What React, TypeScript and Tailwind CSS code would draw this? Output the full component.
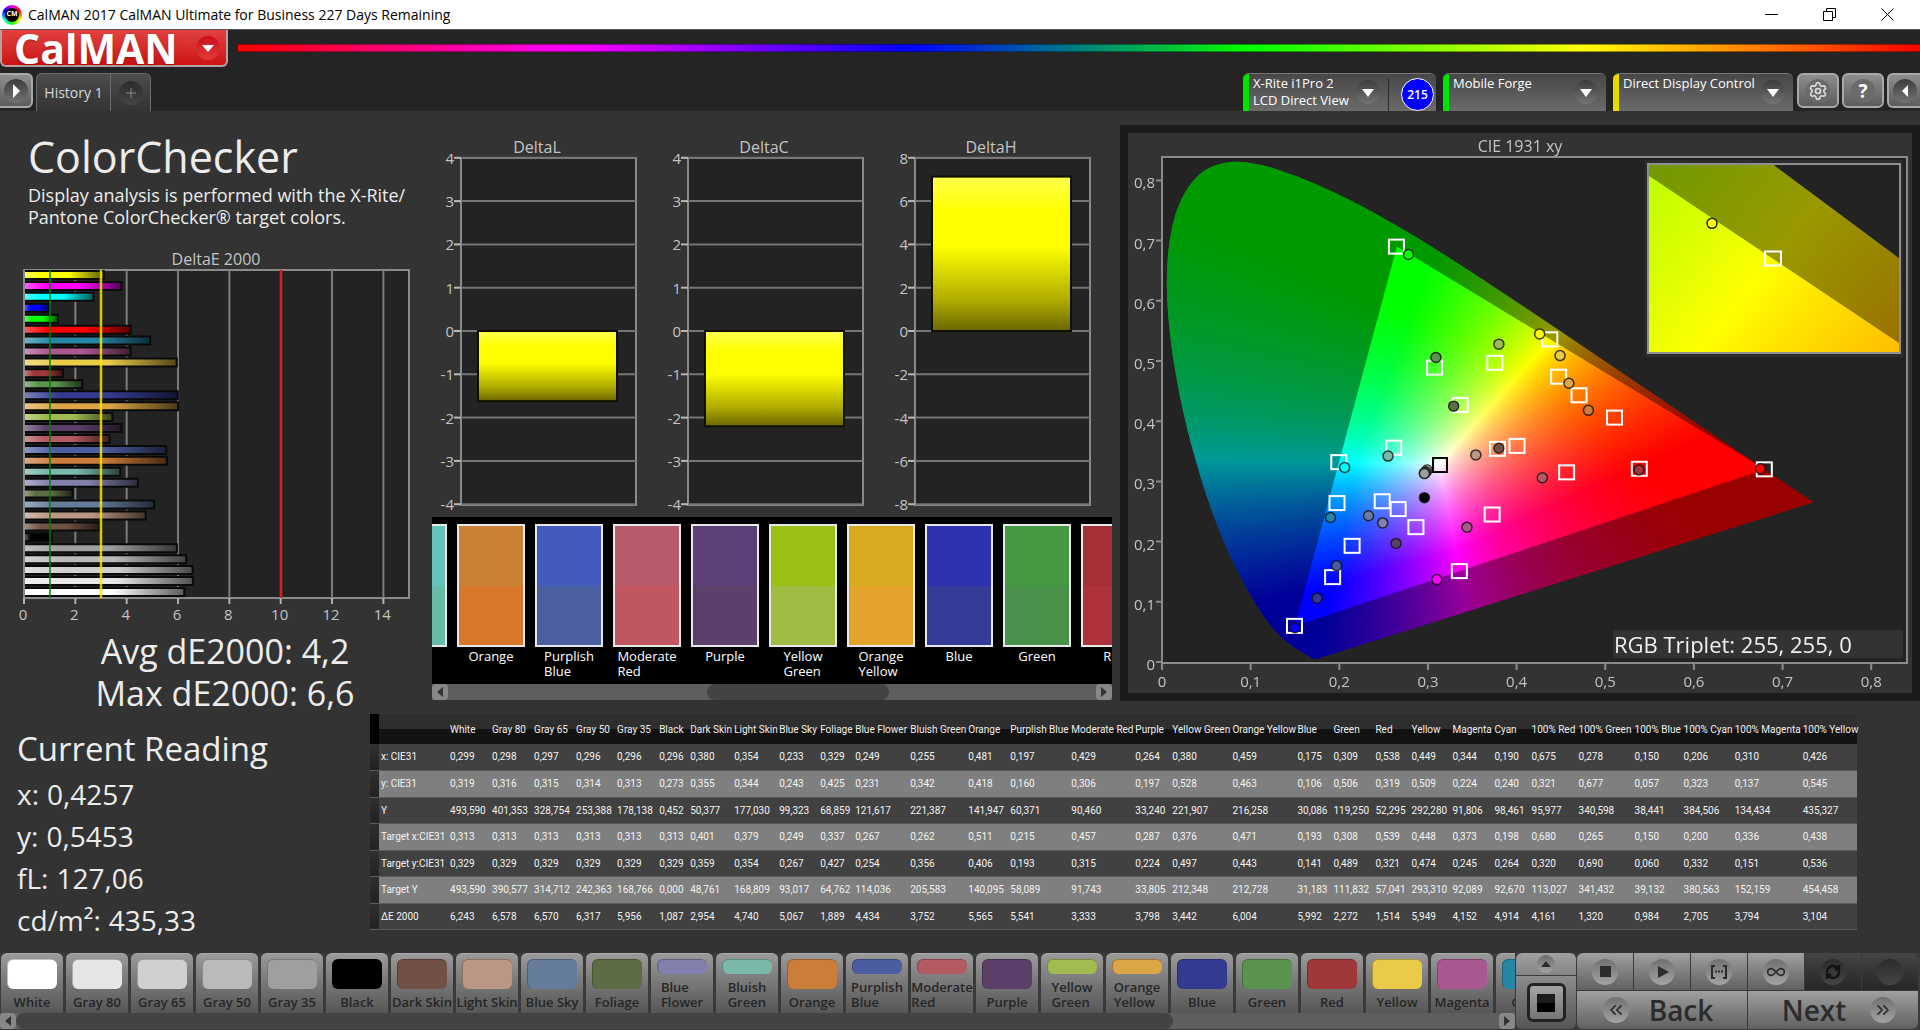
import { useEffect, useRef } from "react";
import type { ReactNode } from "react";
import { ChevronsLeft, ChevronsRight, Infinity as InfinityIcon, RefreshCw, Settings } from "lucide-react";

type Patch = {
  name: string;
  color: string;
  width: number;
  values: string[];
};

const ROWS = ["x: CIE31", "y: CIE31", "Y", "Target x:CIE31", "Target y:CIE31", "Target Y", "ΔE 2000"];

const PATCHES: Patch[] = [
  { name: "White", color: "#ffffff", width: 42, values: ["0,299", "0,319", "493,590", "0,313", "0,329", "493,590", "6,243"] },
  { name: "Gray 80", color: "#e6e6e6", width: 42, values: ["0,298", "0,316", "401,353", "0,313", "0,329", "390,577", "6,578"] },
  { name: "Gray 65", color: "#d0d0d0", width: 42, values: ["0,297", "0,315", "328,754", "0,313", "0,329", "314,712", "6,570"] },
  { name: "Gray 50", color: "#bababa", width: 41, values: ["0,296", "0,314", "253,388", "0,313", "0,329", "242,363", "6,317"] },
  { name: "Gray 35", color: "#9f9f9f", width: 42, values: ["0,296", "0,313", "178,138", "0,313", "0,329", "168,766", "5,956"] },
  { name: "Black", color: "#000000", width: 31, values: ["0,296", "0,273", "0,452", "0,313", "0,329", "0,000", "1,087"] },
  { name: "Dark Skin", color: "#6f5145", width: 44, values: ["0,380", "0,355", "50,377", "0,401", "0,359", "48,761", "2,954"] },
  { name: "Light Skin", color: "#ba9684", width: 45, values: ["0,354", "0,344", "177,030", "0,379", "0,354", "168,809", "4,740"] },
  { name: "Blue Sky", color: "#667c9c", width: 41, values: ["0,233", "0,243", "99,323", "0,249", "0,267", "93,017", "5,067"] },
  { name: "Foliage", color: "#5c6c45", width: 35, values: ["0,329", "0,425", "68,859", "0,337", "0,427", "64,762", "1,889"] },
  { name: "Blue Flower", color: "#8280ad", width: 55, values: ["0,249", "0,231", "121,617", "0,267", "0,254", "114,036", "4,434"] },
  { name: "Bluish Green", color: "#7ab8a9", width: 58, values: ["0,255", "0,342", "221,387", "0,262", "0,356", "205,583", "3,752"] },
  { name: "Orange", color: "#cc7c3b", width: 42, values: ["0,481", "0,418", "141,947", "0,511", "0,406", "140,095", "5,565"] },
  { name: "Purplish Blue", color: "#4b5ca0", width: 61, values: ["0,197", "0,160", "60,371", "0,215", "0,193", "58,089", "5,541"] },
  { name: "Moderate Red", color: "#b35a62", width: 64, values: ["0,429", "0,306", "90,460", "0,457", "0,315", "91,743", "3,333"] },
  { name: "Purple", color: "#5a3f69", width: 37, values: ["0,264", "0,197", "33,240", "0,287", "0,224", "33,805", "3,798"] },
  { name: "Yellow Green", color: "#a2bb50", width: 60, values: ["0,380", "0,528", "221,907", "0,376", "0,497", "212,348", "3,442"] },
  { name: "Orange Yellow", color: "#dca546", width: 65, values: ["0,459", "0,463", "216,258", "0,471", "0,443", "212,728", "6,004"] },
  { name: "Blue", color: "#343a91", width: 36, values: ["0,175", "0,106", "30,086", "0,193", "0,141", "31,183", "5,992"] },
  { name: "Green", color: "#5b944f", width: 42, values: ["0,309", "0,506", "119,250", "0,308", "0,489", "111,832", "2,272"] },
  { name: "Red", color: "#a0373a", width: 36, values: ["0,538", "0,319", "52,295", "0,539", "0,321", "57,041", "1,514"] },
  { name: "Yellow", color: "#e9cb49", width: 41, values: ["0,449", "0,509", "292,280", "0,448", "0,474", "293,310", "5,949"] },
  { name: "Magenta", color: "#ac5890", width: 42, values: ["0,344", "0,224", "91,806", "0,373", "0,245", "92,089", "4,152"] },
  { name: "Cyan", color: "#2785a5", width: 37, values: ["0,190", "0,240", "98,461", "0,198", "0,264", "92,670", "4,914"] },
  { name: "100% Red", color: "#ff0000", width: 47, values: ["0,675", "0,321", "95,977", "0,680", "0,320", "113,027", "4,161"] },
  { name: "100% Green", color: "#00ff00", width: 56, values: ["0,278", "0,677", "340,598", "0,265", "0,690", "341,432", "1,320"] },
  { name: "100% Blue", color: "#0000ff", width: 49, values: ["0,150", "0,057", "38,441", "0,150", "0,060", "39,132", "0,984"] },
  { name: "100% Cyan", color: "#00ffff", width: 51, values: ["0,206", "0,323", "384,506", "0,200", "0,332", "380,563", "2,705"] },
  { name: "100% Magenta", color: "#ff00ff", width: 68, values: ["0,310", "0,137", "134,434", "0,336", "0,151", "152,159", "3,794"] },
  { name: "100% Yellow", color: "#ffff00", width: 55, values: ["0,426", "0,545", "435,327", "0,438", "0,536", "454,458", "3,104"] },
];

const LABEL_COLS = [9, 70];
const TABLE_WIDTH = PATCHES.reduce((sum, p) => sum + p.width, LABEL_COLS[0] + LABEL_COLS[1]);

// measured colour on top, target colour below
const COMPARE = [
  { name: "Bluish Green", top: "#65c2b8", bottom: "#66bcab" },
  { name: "Orange", top: "#c98133", bottom: "#d87629" },
  { name: "Purplish Blue", top: "#435bbd", bottom: "#4a5ea1" },
  { name: "Moderate Red", top: "#b85c6b", bottom: "#c05660" },
  { name: "Purple", top: "#5b3f78", bottom: "#5b4069" },
  { name: "Yellow Green", top: "#9ac018", bottom: "#9fbb42" },
  { name: "Orange Yellow", top: "#d7a91e", bottom: "#e3a22a" },
  { name: "Blue", top: "#2d32b0", bottom: "#343c95" },
  { name: "Green", top: "#459943", bottom: "#4a9249" },
  { name: "Red", top: "#a63038", bottom: "#ae323b" },
];

const LOCUS: number[][] = [
  [0.1741, 0.005], [0.1726, 0.0048], [0.1714, 0.0051], [0.1689, 0.0069], [0.1644, 0.0109], [0.1566, 0.0177],
  [0.151, 0.0227], [0.144, 0.0297], [0.1355, 0.0399], [0.1241, 0.0578], [0.1096, 0.0868], [0.0913, 0.1327],
  [0.0687, 0.2007], [0.0454, 0.295], [0.0235, 0.4127], [0.0082, 0.5384], [0.0039, 0.6548], [0.0139, 0.7502],
  [0.0389, 0.812], [0.0743, 0.8338], [0.1142, 0.8262], [0.1547, 0.8059], [0.1929, 0.7816], [0.2296, 0.7543],
  [0.2658, 0.7243], [0.3016, 0.6923], [0.3373, 0.6589], [0.3731, 0.6245], [0.4441, 0.5547], [0.5125, 0.4866],
  [0.5752, 0.4242], [0.627, 0.3725], [0.6658, 0.334], [0.6915, 0.3083], [0.719, 0.2809], [0.7347, 0.2653],
];

const GAMUT = [[0.68, 0.32], [0.265, 0.69], [0.15, 0.06]];
const WHITE = [0.3127, 0.329];

const num = (s: string) => parseFloat(s.replace(",", "."));

type Point = (x: number, y: number) => [number, number];
type Box = { x: number; y: number; w: number; h: number };

const PLOT: Box = { x: 34, y: 24, w: 745, h: 506 };
const INSET: Box = { x: 520, y: 31, w: 252, h: 189 };

const plotPoint: Point = (x, y) => [34 + x * 886.5, 529 - y * 602];
const insetPoint: Point = (x, y) => [
  INSET.x + ((x - 0.413) / 0.05) * INSET.w,
  INSET.y + ((0.561 - y) / 0.05) * INSET.h,
];

function det(a: number[], b: number[], c: number[]) {
  return a[0] * (b[1] * c[2] - b[2] * c[1]) - b[0] * (a[1] * c[2] - a[2] * c[1]) + c[0] * (a[1] * b[2] - a[2] * b[1]);
}

// weights of the three primaries for a chromaticity
function mix(x: number, y: number) {
  const v = [x, y, 1 - x - y];
  const [r, g, b] = GAMUT.map(([px, py]) => [px, py, 1 - px - py]);
  const d = det(r, g, b);
  return [det(v, g, b) / d, det(r, v, b) / d, det(r, g, v) / d];
}

function paintRegion(ctx: CanvasRenderingContext2D, box: Box, point: Point) {
  const [x0, y0] = point(0, 0);
  const [x1, y1] = point(1, 1);
  const white = mix(WHITE[0], WHITE[1]);
  const tile = document.createElement("canvas");
  tile.width = box.w;
  tile.height = box.h;
  const tctx = tile.getContext("2d")!;
  const img = tctx.createImageData(box.w, box.h);
  for (let j = 0; j < box.h; j++) {
    for (let i = 0; i < box.w; i++) {
      const x = (box.x + i + 0.5 - x0) / (x1 - x0);
      const y = (box.y + j + 0.5 - y0) / (y1 - y0);
      const rgb = mix(x, y).map((c, k) => Math.max(0, c / white[k]));
      const max = Math.max(...rgb, 0.0001);
      const o = (j * box.w + i) * 4;
      // small floor keeps the areas around the primaries fully saturated
      for (let k = 0; k < 3; k++) img.data[o + k] = (255 * (rgb[k] / max - 0.13)) / 0.87;
      img.data[o + 3] = 255;
    }
  }
  tctx.putImageData(img, 0, 0);

  const pts = LOCUS.map(([x, y]) => point(x, y));
  const locus = new Path2D();
  locus.moveTo(pts[0][0], pts[0][1]);
  for (let i = 1; i < pts.length - 1; i++) {
    const [cx, cy] = pts[i];
    const [nx, ny] = pts[i + 1];
    locus.quadraticCurveTo(cx, cy, (cx + nx) / 2, (cy + ny) / 2);
  }
  locus.lineTo(pts[pts.length - 1][0], pts[pts.length - 1][1]);
  locus.closePath();

  const shade = new Path2D();
  shade.rect(box.x, box.y, box.w, box.h);
  GAMUT.forEach(([x, y], i) => {
    const [px, py] = point(x, y);
    if (i === 0) shade.moveTo(px, py);
    else shade.lineTo(px, py);
  });
  shade.closePath();

  ctx.fillStyle = "#232323";
  ctx.fillRect(box.x, box.y, box.w, box.h);
  ctx.save();
  ctx.beginPath();
  ctx.rect(box.x, box.y, box.w, box.h);
  ctx.clip();
  ctx.clip(locus);
  ctx.drawImage(tile, box.x, box.y);
  ctx.fillStyle = "rgba(0,0,0,0.4)";
  ctx.fill(shade, "evenodd");
  ctx.restore();
}

function CieChart() {
  const canvasRef = useRef<HTMLCanvasElement>(null);

  useEffect(() => {
    const ctx = canvasRef.current?.getContext("2d");
    if (!ctx) return;
    paintRegion(ctx, PLOT, plotPoint);
    ctx.fillStyle = "#2d2d2d";
    ctx.fillRect(INSET.x - 3, INSET.y - 4, INSET.w + 6, INSET.h + 8);
    paintRegion(ctx, INSET, insetPoint);
  }, []);

  const ticks = [0, 1, 2, 3, 4, 5, 6, 7, 8];
  const label = (t: number) => (t === 0 ? "0" : `0,${t}`);
  const [tx, ty] = insetPoint(0.438, 0.536);
  const [mx, my] = insetPoint(0.4257, 0.5453);

  return (
    <div className="mt-3.5 bg-[#1b1b1b] p-2">
      <div className="relative bg-[#333333]">
        <canvas ref={canvasRef} width={784} height={560} className="absolute inset-0 h-full w-full" />
        <svg viewBox="0 0 784 560" className="relative block w-full" role="img" aria-label="CIE 1931 xy">
          <text x="392" y="19" textAnchor="middle" className="fill-[#c4c4c4] text-[16px]">CIE 1931 xy</text>
          <rect x="34" y="24" width="745" height="506" fill="none" stroke="#8a8a8a" strokeWidth="2" />
          {ticks.map((t) => {
            const [x, y] = plotPoint(t / 10, t / 10);
            return (
              <g key={t} stroke="#8a8a8a" strokeWidth="2">
                <path d={`M${x} 530v7M${28} ${y}h6`} />
                <text x={x} y="554" textAnchor="middle" stroke="none" className="fill-[#c4c4c4] text-[15px]">{label(t)}</text>
                <text x="27" y={y + 8} textAnchor="end" stroke="none" className="fill-[#c4c4c4] text-[15px]">{label(t)}</text>
              </g>
            );
          })}
          {PATCHES.slice(6).map((p) => {
            const [x, y] = plotPoint(num(p.values[3]), num(p.values[4]));
            return <rect key={p.name} x={x - 8} y={y - 7} width="15" height="14" fill="none" stroke="#fff" strokeWidth="2" />;
          })}
          {PATCHES.map((p) => {
            const [x, y] = plotPoint(num(p.values[0]), num(p.values[1]));
            return <circle key={p.name} cx={x} cy={y} r="5" fill={p.color} stroke="#111" strokeOpacity="0.8" strokeWidth="1.5" />;
          })}
          <rect x="305" y="325" width="14" height="14" fill="none" stroke="#000" strokeWidth="2" />
          <rect x={INSET.x} y={INSET.y} width={INSET.w} height={INSET.h} fill="none" stroke="#8f8f8f" strokeWidth="2" />
          <rect x={tx - 9} y={ty - 7} width="16" height="14" fill="none" stroke="#fff" strokeWidth="2" />
          <circle cx={mx} cy={my} r="5" fill="#ff0" stroke="#222" strokeWidth="1.5" />
          <rect x="485" y="497" width="290" height="28" fill="#333333" />
          <text x="486" y="520" className="fill-[#f0f0f0] text-[22px]">RGB Triplet: 255, 255, 0</text>
        </svg>
      </div>
    </div>
  );
}

function DeltaEChart() {
  const unit = 25.67;
  const bars = [...PATCHES].reverse();
  const grid = [2, 4, 6, 8, 12, 14];
  return (
    <svg viewBox="0 0 430 377" className="mt-5 block w-full" role="img" aria-label="DeltaE 2000">
      <defs>
        <linearGradient id="bar-sheen">
          <stop offset="0" stopColor="#fff" stopOpacity="0.35" />
          <stop offset="0.22" stopColor="#fff" stopOpacity="0" />
          <stop offset="0.55" stopColor="#000" stopOpacity="0" />
          <stop offset="1" stopColor="#000" stopOpacity="0.65" />
        </linearGradient>
      </defs>
      <text x="216" y="17" textAnchor="middle" className="fill-[#c4c4c4] text-[16px]">DeltaE 2000</text>
      <rect x="24" y="22" width="385" height="328" fill="#232323" stroke="#8a8a8a" strokeWidth="2" />
      {grid.map((g) => (
        <path key={g} d={`M${24 + g * unit} 22v328`} stroke="#7c7c7c" strokeWidth="2" />
      ))}
      {bars.map((p, i) => {
        const w = num(p.values[6]) * unit - 1;
        const y = 23 + i * 10.93;
        return (
          <g key={p.name}>
            <rect x="25" y={y} width={w} height="8" fill={p.color} />
            <rect x="25" y={y} width={w} height="8" fill="url(#bar-sheen)" />
            <path d={`M25 ${y}h${w}v8h-${w}`} fill="none" stroke="#0a0a0a" strokeWidth="2" />
          </g>
        );
      })}
      <path d="M50 22v328" stroke="#008000" strokeWidth="1.5" />
      <path d="M101 22v328" stroke="#f2ea00" strokeOpacity="0.85" strokeWidth="2.5" />
      <path d="M281 22v328" stroke="#d9201c" strokeWidth="2.5" />
      {[0, 2, 4, 6, 8, 10, 12, 14].map((t) => (
        <g key={t}>
          <path d={`M${24 + t * unit} 350v6`} stroke="#b0b0b0" strokeWidth="2" />
          <text x={23 + t * unit} y="372" textAnchor="middle" className="fill-[#c4c4c4] text-[15px]">{t}</text>
        </g>
      ))}
    </svg>
  );
}

function DeltaChart({ title, max, value }: { title: string; max: number; value: number }) {
  const step = 43.3;
  const zero = 200;
  const h = (Math.abs(value) / max) * 4 * step;
  const top = value > 0 ? zero - h : zero;
  return (
    <svg viewBox="0 0 227 386" className="block w-full" role="img" aria-label={title}>
      <defs>
        <linearGradient id="column-sheen" x1="0" y1="0" x2="0" y2="1">
          <stop offset="0" stopColor="#ffff50" />
          <stop offset="0.22" stopColor="#ffff00" />
          <stop offset="0.45" stopColor="#ffff00" />
          <stop offset="0.8" stopColor="#b0ac00" />
          <stop offset="1" stopColor="#6a6600" />
        </linearGradient>
      </defs>
      <text x="107" y="22" textAnchor="middle" className="fill-[#c4c4c4] text-[16px]">{title}</text>
      <rect x="31" y="27" width="175" height="347" fill="#232323" stroke="#8a8a8a" strokeWidth="2" />
      {[4, 3, 2, 1, 0, -1, -2, -3, -4].map((t) => {
        const y = zero - t * step;
        return (
          <g key={t}>
            <path d={`M31 ${y}h175`} stroke="#757575" strokeWidth="2" />
            <path d={`M24 ${y}h7`} stroke="#b8b8b8" strokeWidth="2" />
            <text x="24" y={y + 6} textAnchor="end" className="fill-[#c4c4c4] text-[15px]">{(t * max) / 4}</text>
          </g>
        );
      })}
      <rect x="48" y={top} width="139" height={h} fill="url(#column-sheen)" stroke="#101000" strokeWidth="2" />
    </svg>
  );
}

function RoundArrow({ dir, className = "" }: { dir: "down" | "left" | "right"; className?: string }) {
  const paths = { down: "M6 9h12l-6 8z", left: "M15 6v12l-6-6z", right: "M9 5v14l7-7z" };
  return (
    <span className={`flex h-6 w-6 items-center justify-center rounded-full bg-linear-to-b from-[#3d3d3d] to-[#757575] ${className}`}>
      <svg viewBox="0 0 24 24" className="h-6 w-6 fill-white"><path d={paths[dir]} /></svg>
    </span>
  );
}

function SourcePanel({ bar, lines, children, className }: { bar: string; lines: string[]; children?: ReactNode; className: string }) {
  return (
    <div className={`flex h-[38px] overflow-hidden rounded-t-md border-t border-[#777] bg-linear-to-b from-[#474747] to-[#6b6b6b] ${className}`}>
      <div className={`w-1.5 ${bar}`} />
      <button className="flex flex-1 items-start justify-between pl-1 pr-2 text-left text-[13px] leading-[17px] whitespace-nowrap text-white">
        <span className="pt-px">{lines.map((l) => <span key={l} className="block">{l}</span>)}</span>
        <RoundArrow dir="down" className="mt-1.5 -ml-3" />
      </button>
      {children}
    </div>
  );
}

function SquareButton({ label, children, className = "w-[42px] rounded-md border-2" }: { label: string; children: ReactNode; className?: string }) {
  return (
    <button
      aria-label={label}
      className={`flex h-[35px] items-center justify-center border-[#a8a8a8] bg-linear-to-b from-[#8e8e8e] to-[#5c5c5c] ${className}`}
    >
      {children}
    </button>
  );
}

function ScrollBar({ thumb }: { thumb: string }) {
  return (
    <div className="flex h-4 items-center justify-between bg-[#5e5e5e]">
      <button aria-label="Scroll left" className="flex h-4 w-4 items-center justify-center rounded-sm bg-[#878787]">
        <svg viewBox="0 0 10 10" className="h-2.5 w-2.5 fill-[#333]"><path d="M8 0v10L2 5z" /></svg>
      </button>
      <div className="h-full flex-1"><div className={`h-full rounded-lg bg-[#434343] ${thumb}`} /></div>
      <button aria-label="Scroll right" className="flex h-4 w-4 items-center justify-center rounded-sm bg-[#878787]">
        <svg viewBox="0 0 10 10" className="h-2.5 w-2.5 fill-[#333]"><path d="M2 0v10l6-5z" /></svg>
      </button>
    </div>
  );
}

function Label({ name }: { name: string }) {
  const single = ["Dark Skin", "Light Skin", "Blue Sky"].includes(name) || name.startsWith("Gray");
  const lines = single ? [name] : name.split(" ");
  return <span className="inline-block text-left whitespace-nowrap">{lines.map((l) => <span key={l} className="block">{l}</span>)}</span>;
}

function TransportButton({ label, dim, children }: { label: string; dim?: boolean; children?: ReactNode }) {
  return (
    <button
      aria-label={label}
      disabled={dim}
      className={`flex h-[37px] flex-1 items-center justify-center bg-linear-to-b ${dim ? "from-[#454545] to-[#262626]" : "from-[#a0a0a0] to-[#616161]"}`}
    >
      <span className={`flex h-[26px] w-[26px] items-center justify-center rounded-full bg-linear-to-b text-[#2c2c2c] ${dim ? "from-[#2c2c2c] to-[#444]" : "from-[#707070] to-[#a4a4a4]"}`}>
        {children}
      </span>
    </button>
  );
}

export default function App() {
  return (
    <div className="flex min-h-screen flex-col bg-[#333333] font-['Open_Sans','Noto_Sans',sans-serif] text-[#ececec]">
      <div className="flex h-[29px] items-center bg-white text-black">
        <div className="ml-0.5 flex h-5 w-5 items-center justify-center rounded-full bg-[conic-gradient(#f0f,#f00,#ff0,#0f0,#0ff,#00f,#f0f)]">
          <div className="flex h-3.5 w-3.5 items-center justify-center rounded-full bg-black text-[7px] font-bold text-white">CM</div>
        </div>
        <span className="ml-1.5 flex-1 text-[14px] leading-5">CalMAN 2017 CalMAN Ultimate for Business 227 Days Remaining</span>
        <div className="mr-1 flex h-full">
          <button aria-label="Minimize" className="flex w-[58px] items-center justify-center">
            <svg viewBox="0 0 13 13" className="h-[13px] w-[13px]"><path d="M0 6.5h13" stroke="#000" /></svg>
          </button>
          <button aria-label="Restore" className="flex w-[58px] items-center justify-center">
            <svg viewBox="0 0 13 13" className="h-[13px] w-[13px]" fill="none" stroke="#000"><path d="M.5 3.5h9v9h-9zM3.5 3V.5h9v9H10" /></svg>
          </button>
          <button aria-label="Close" className="flex w-[58px] items-center justify-center">
            <svg viewBox="0 0 13 13" className="h-[13px] w-[13px]" stroke="#000"><path d="M.5.5l12 12M12.5.5l-12 12" /></svg>
          </button>
        </div>
      </div>

      <header className="border-t border-[#555] bg-[#242424]">
        <div className="flex items-start gap-2.5">
          <button className="flex h-[37px] w-[228px] items-center justify-between rounded-b-md border-2 border-t-0 border-[#b9a0a0] bg-linear-to-b from-[#e24040] to-[#cc1010] pr-1.5 pl-3 text-white">
            <span className="text-[41px] leading-8 font-bold text-shadow-md">CalMAN</span>
            <span className="flex h-6 w-6 items-center justify-center rounded-full bg-linear-to-b from-[#c90c1c] to-[#e03838]">
              <svg viewBox="0 0 24 24" className="h-6 w-6 fill-white"><path d="M6 9h12l-6 7z" /></svg>
            </span>
          </button>
          <div className="mt-3.5 h-2 flex-1 border-y border-black/40 bg-[linear-gradient(to_right,#f00,#f0f_20%,#00f_40%,#0f0_60%,#ff0_80%,#f00)]" />
        </div>
        <div className="mt-1.5 flex justify-between">
          <div className="flex items-start">
            <button aria-label="Expand left panel" className="mr-[3px] flex h-[35px] w-[33px] items-center justify-center rounded-r-md border-2 border-l-0 border-[#a8a8a8] bg-linear-to-b from-[#8e8e8e] to-[#5c5c5c]">
              <RoundArrow dir="right" />
            </button>
            <div className="flex h-[38px] rounded-t-md border border-b-0 border-[#6d6d6d] bg-linear-to-b from-[#4d4d4d] to-[#333]">
              <button className="w-[73px] text-[14px] text-[#d8d8d8]">History 1</button>
              <button aria-label="Add history" className="flex w-10 items-center justify-center border-l border-[#6d6d6d]">
                <span className="flex h-6 w-6 items-center justify-center rounded-full bg-linear-to-b from-[#2c2c2c] to-[#454545]">
                  <svg viewBox="0 0 10 10" className="h-2.5 w-2.5" stroke="#8a8a8a"><path d="M5 0v10M0 5h10" /></svg>
                </span>
              </button>
            </div>
          </div>
          <div className="flex">
            <SourcePanel bar="bg-[#00e600]" lines={["X-Rite i1Pro 2", "LCD Direct View"]} className="w-[193px]">
              <div className="mt-1 flex w-12 items-center justify-end border-l border-[#2e2e2e] pr-0.5">
                <span className="flex h-[33px] w-[33px] items-center justify-center rounded-full border border-white bg-[#0000ff] text-[12px] font-semibold text-white">215</span>
              </div>
            </SourcePanel>
            <SourcePanel bar="bg-[#00e600]" lines={["Mobile Forge"]} className="ml-[7px] w-[163px]" />
            <SourcePanel bar="bg-[#e6dc00]" lines={["Direct Display Control"]} className="ml-[7px] w-[180px]" />
            <div className="ml-1 flex gap-[3px]">
              <SquareButton label="Settings">
                <span className="flex h-6 w-6 items-center justify-center rounded-full bg-[#6a6a6a]">
                  <Settings className="h-5 w-5 text-[#dcdcdc]" />
                </span>
              </SquareButton>
              <SquareButton label="Help">
                <span className="flex h-6 w-6 items-center justify-center rounded-full bg-[#6a6a6a] text-[19px] leading-6 font-bold text-white">?</span>
              </SquareButton>
              <SquareButton label="Expand right panel" className="w-[33px] rounded-l-md border-2 border-r-0">
                <RoundArrow dir="left" />
              </SquareButton>
            </div>
          </div>
        </div>
      </header>

      <main className="flex-1">
        <div className="grid grid-cols-[430fr_690fr_800fr]">
          <section className="pt-[22px]">
            <h1 className="pl-7 text-[43px] leading-12">ColorChecker</h1>
            <p className="mt-[3px] pl-7 text-[18px] leading-[22px] whitespace-nowrap">
              Display analysis is performed with the X-Rite/
              <br />
              Pantone ColorChecker® target colors.
            </p>
            <DeltaEChart />
            <div className="mt-[5px] pl-5 text-center text-[34px] leading-[42px]">
              <p>Avg dE2000: 4,2</p>
              <p>Max dE2000: 6,6</p>
            </div>
          </section>

          <section className="min-w-0 pt-5">
            <div className="grid grid-cols-3 pr-[9px]">
              <DeltaChart title="DeltaL" max={4} value={-1.62} />
              <DeltaChart title="DeltaC" max={4} value={-2.2} />
              <DeltaChart title="DeltaH" max={8} value={7.13} />
            </div>
            <div className="mr-2 ml-0.5">
              <div className="h-[167px] overflow-hidden bg-black pt-[7px]">
                <div className="-ml-[53px] flex gap-2.5">
                  {COMPARE.map((c) => (
                    <div key={c.name} className="flex w-[68px] shrink-0 flex-col items-center">
                      <div className="h-[123px] w-full border-2 border-[#e8e8e8]">
                        <div className="h-1/2" style={{ backgroundColor: c.top }} />
                        <div className="h-1/2" style={{ backgroundColor: c.bottom }} />
                      </div>
                      <div className="mt-0.5 text-[13px] leading-[15px] text-white"><Label name={c.name} /></div>
                    </div>
                  ))}
                </div>
              </div>
              <ScrollBar thumb="ml-[40%] w-[28%]" />
            </div>
          </section>

          <section className="min-w-0"><CieChart /></section>
        </div>

        <div className="flex">
          <section className="w-[370px] shrink-0 pt-3.5 pl-[17px]">
            <h2 className="text-[33px] leading-[42px]">Current Reading</h2>
            <dl className="mt-[3px] text-[28px] leading-[42px]">
              {[["x", "0,4257"], ["y", "0,5453"], ["fL", "127,06"], ["cd/m²", "435,33"]].map(([k, v]) => (
                <div key={k} className="flex gap-2">
                  <dt>{k}:</dt>
                  <dd>{v}</dd>
                </div>
              ))}
            </dl>
          </section>
          <div className="min-w-0 flex-1 pr-[63px]">
            <table className="w-full table-fixed border-collapse text-left font-['Roboto','Open_Sans',sans-serif] text-[10px] whitespace-nowrap">
              <colgroup>
                {[...LABEL_COLS, ...PATCHES.map((p) => p.width)].map((w, i) => (
                  <col key={i} style={{ width: `${(w / TABLE_WIDTH) * 100}%` }} />
                ))}
              </colgroup>
              <thead>
                <tr className="h-[30px] bg-[linear-gradient(#2e2e2e_50%,#121212_50%)]">
                  <td className="bg-black p-0" />
                  <td className="p-0" />
                  {PATCHES.map((p) => (
                    <th key={p.name} scope="col" className="p-0 pl-px font-normal text-[#f0f0f0]">{p.name}</th>
                  ))}
                </tr>
              </thead>
              <tbody>
                {ROWS.map((row, i) => (
                  <tr key={row} className="border-b border-[#5a5a5a] text-[#f4f4f4] odd:h-[26px] odd:bg-[#414141] even:h-[27px] even:bg-[#7f7f7f]">
                    <td className="bg-linear-to-b from-[#303030] to-[#222] p-0" />
                    <th scope="row" className="p-0 pl-0.5 font-normal">{row}</th>
                    {PATCHES.map((p) => (
                      <td key={p.name} className="p-0 pl-px">{p.values[i]}</td>
                    ))}
                  </tr>
                ))}
              </tbody>
            </table>
          </div>
        </div>
      </main>

      <footer className="flex h-[77px] bg-[#3a3a3a]">
        <div className="min-w-0 flex-1 overflow-hidden">
          <div className="flex gap-[3px] overflow-hidden pl-px">
            {PATCHES.map((p) => (
              <button
                key={p.name}
                className="flex h-[60px] w-[62px] shrink-0 flex-col items-center rounded-t-md border-t border-[#aaa] bg-linear-to-b from-[#9a9a9a] to-[#565656] pt-[5px] pb-[3px] text-[13px] leading-[15px] font-semibold text-[#262626]"
              >
                <span className="w-[50px] flex-1 rounded-md border-t border-l border-black/25" style={{ backgroundColor: p.color }} />
                <span className="mt-1.5"><Label name={p.name} /></span>
              </button>
            ))}
          </div>
          <ScrollBar thumb="w-[78%]" />
        </div>
        <div className="flex w-[62px] shrink-0 flex-col gap-px bg-[#3a3a3a] px-px">
          <button aria-label="Expand patterns" className="flex h-[22px] items-center justify-center rounded-t-md bg-linear-to-b from-[#a0a0a0] to-[#858585]">
            <span className="flex h-[18px] w-[18px] items-center justify-center rounded-full bg-linear-to-b from-[#6c6c6c] to-[#a4a4a4]">
              <svg viewBox="0 0 10 10" className="h-2.5 w-2.5 fill-[#2c2c2c]"><path d="M0 8h10L5 2z" /></svg>
            </span>
          </button>
          <button aria-label="Pattern window" className="flex h-[53px] items-center justify-center rounded-b-md bg-linear-to-b from-[#8c8c8c] to-[#555]">
            <span className="flex h-[39px] w-[39px] items-center justify-center rounded-md border-3 border-[#222] bg-linear-to-b from-[#a4a4a4] to-[#757575]">
              <span className="h-[18px] w-[18px] bg-[linear-gradient(#1c1c1c_50%,#000_50%)]" />
            </span>
          </button>
        </div>
        <div className="flex w-[343px] shrink-0 flex-col gap-px pr-0.5">
          <div className="flex gap-px overflow-hidden rounded-t-md">
            <TransportButton label="Stop"><span className="h-[11px] w-[11px] bg-[#2c2c2c]" /></TransportButton>
            <TransportButton label="Play">
              <svg viewBox="0 0 12 14" className="ml-0.5 h-3.5 w-3 fill-[#2c2c2c]"><path d="M1 1v12l11-6z" /></svg>
            </TransportButton>
            <TransportButton label="Read series">
              <svg viewBox="0 0 18 14" className="h-3.5 w-[18px]" fill="none" stroke="#2c2c2c" strokeWidth="2">
                <path d="M5 1H2v12h3M13 1h3v12h-3" />
                <path d="M5 6.5h2M8 6.5h2M11 6.5h2" />
              </svg>
            </TransportButton>
            <TransportButton label="Read continuously"><InfinityIcon className="h-5 w-5" /></TransportButton>
            <TransportButton label="Refresh" dim><RefreshCw className="h-4 w-4 text-[#111]" strokeWidth={3.5} /></TransportButton>
            <TransportButton label="Record" dim />
          </div>
          <div className="grid grid-cols-2 gap-px overflow-hidden rounded-b-md">
            <button className="flex h-[38px] items-center justify-center gap-5 bg-linear-to-b from-[#a0a0a0] to-[#616161] pr-2 text-[28px] leading-9 font-semibold text-[#2c2c2c]">
              <span className="flex h-[26px] w-[26px] items-center justify-center rounded-full bg-linear-to-b from-[#707070] to-[#a4a4a4]"><ChevronsLeft className="h-5 w-5" /></span>
              Back
            </button>
            <button className="flex h-[38px] items-center justify-center gap-6 bg-linear-to-b from-[#a0a0a0] to-[#616161] pl-3 text-[28px] leading-9 font-semibold text-[#2c2c2c]">
              Next
              <span className="flex h-[26px] w-[26px] items-center justify-center rounded-full bg-linear-to-b from-[#707070] to-[#a4a4a4]"><ChevronsRight className="h-5 w-5" /></span>
            </button>
          </div>
        </div>
      </footer>
    </div>
  );
}
